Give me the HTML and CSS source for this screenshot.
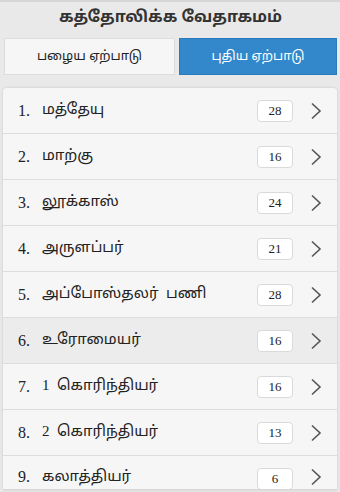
FILE: index.html
```html
<!DOCTYPE html>
<html lang="ta">
<head>
<meta charset="utf-8">
<title>கத்தோலிக்க வேதாகமம்</title>
<link rel="stylesheet" href="styles.css">
</head>
<body>
<div class="page">
  <header class="header">
    <h1 class="title">கத்தோலிக்க வேதாகமம்</h1>
    <div class="tabs">
      <button class="tab">பழைய ஏற்பாடு</button>
      <button class="tab tab-active">புதிய ஏற்பாடு</button>
    </div>
  </header>
  <div class="list-wrap">
    <ul class="list">
      <li class="row"><span class="num">1.</span><span class="name">மத்தேயு</span><span class="count">28</span><span class="chev"><svg width="12" height="18" viewBox="0 0 12 18"><path d="M2 1.5 L10 9 L2 16.5" fill="none" stroke="#555" stroke-width="1.6"/></svg></span></li>
      <li class="row"><span class="num">2.</span><span class="name">மாற்கு</span><span class="count">16</span><span class="chev"><svg width="12" height="18" viewBox="0 0 12 18"><path d="M2 1.5 L10 9 L2 16.5" fill="none" stroke="#555" stroke-width="1.6"/></svg></span></li>
      <li class="row"><span class="num">3.</span><span class="name">லூக்காஸ்</span><span class="count">24</span><span class="chev"><svg width="12" height="18" viewBox="0 0 12 18"><path d="M2 1.5 L10 9 L2 16.5" fill="none" stroke="#555" stroke-width="1.6"/></svg></span></li>
      <li class="row"><span class="num">4.</span><span class="name">அருளப்பர்</span><span class="count">21</span><span class="chev"><svg width="12" height="18" viewBox="0 0 12 18"><path d="M2 1.5 L10 9 L2 16.5" fill="none" stroke="#555" stroke-width="1.6"/></svg></span></li>
      <li class="row"><span class="num">5.</span><span class="name">அப்போஸ்தலர் &nbsp;பணி</span><span class="count">28</span><span class="chev"><svg width="12" height="18" viewBox="0 0 12 18"><path d="M2 1.5 L10 9 L2 16.5" fill="none" stroke="#555" stroke-width="1.6"/></svg></span></li>
      <li class="row row-hover"><span class="num">6.</span><span class="name">உரோமையர்</span><span class="count">16</span><span class="chev"><svg width="12" height="18" viewBox="0 0 12 18"><path d="M2 1.5 L10 9 L2 16.5" fill="none" stroke="#555" stroke-width="1.6"/></svg></span></li>
      <li class="row"><span class="num">7.</span><span class="name">1 &nbsp;கொரிந்தியர்</span><span class="count">16</span><span class="chev"><svg width="12" height="18" viewBox="0 0 12 18"><path d="M2 1.5 L10 9 L2 16.5" fill="none" stroke="#555" stroke-width="1.6"/></svg></span></li>
      <li class="row"><span class="num">8.</span><span class="name">2 &nbsp;கொரிந்தியர்</span><span class="count">13</span><span class="chev"><svg width="12" height="18" viewBox="0 0 12 18"><path d="M2 1.5 L10 9 L2 16.5" fill="none" stroke="#555" stroke-width="1.6"/></svg></span></li>
      <li class="row row-last"><span class="num">9.</span><span class="name">கலாத்தியர்</span><span class="count">6</span><span class="chev"><svg width="12" height="18" viewBox="0 0 12 18"><path d="M2 1.5 L10 9 L2 16.5" fill="none" stroke="#555" stroke-width="1.6"/></svg></span></li>
    </ul>
  </div>
</div>
</body>
</html>
```
FILE: styles.css
```css
html, body {
  margin: 0;
  padding: 0;
  background: #e9e9e9;
}
.page {
  width: 340px;
  height: 492px;
  display: flex;
  flex-direction: column;
  border-top: 2px solid #d6d6d6;
  box-sizing: border-box;
  font-family: "Liberation Serif", "Noto Sans Tamil", "Lohit Tamil", serif;
  color: #222;
  overflow: hidden;
}
.header {
  display: flex;
  flex-direction: column;
  padding: 0 3px 0 4px;
}
.title {
  margin: 0;
  height: 36px;
  line-height: 33px;
  text-align: center;
  font-family: "Noto Sans Tamil", "Noto Sans", sans-serif;
  font-size: 16px;
  font-weight: bold;
  color: #333;
}
.tabs {
  display: flex;
  gap: 4px;
  height: 37px;
}
.tab {
  flex: 1 1 0;
  margin: 0;
  border: 1px solid #dcdcdc;
  background: #f6f6f6;
  color: #222;
  font-family: "Noto Sans Tamil", "Noto Sans", sans-serif;
  font-size: 13px;
  padding: 0;
  border-radius: 0;
}
.tab:first-child {
  flex-basis: 0;
  flex-grow: 171;
}
.tab-active {
  flex-grow: 158;
  background: #3388cc;
  border-color: #2a7bbd;
  color: #fff;
}
.list-wrap {
  margin: 13px 3px 0 3px;
  height: 401px;
  overflow: hidden;
  border-radius: 4px 4px 0 0;
  box-shadow: 0 0 3px rgba(0,0,0,0.15);
  border-bottom: 1px solid #d8d8d8;
}
.list {
  list-style: none;
  margin: 0;
  padding: 0;
}
.row {
  display: flex;
  align-items: center;
  height: 45px;
  border-bottom: 1px solid #dddddd;
  background: #f6f6f6;
  padding: 0 0 0 15px;
  font-size: 16px;
}
.row-last {
  height: 33px;
  align-items: flex-start;
  padding-top: 12px;
  border-bottom: none;
}
.row-last .count,
.row-last .num,
.row-last .name {
  margin-top: 0;
}
.row-hover {
  background: #ececec;
}
.num {
  width: 24px;
  flex: none;
}
.name {
  flex: 1 1 auto;
  font-size: 15px;
}
.count {
  flex: none;
  width: 36px;
  height: 22px;
  box-sizing: border-box;
  border: 1px solid #dadada;
  border-radius: 4px;
  background: #fff;
  text-align: center;
  line-height: 20px;
  font-size: 13px;
  font-weight: normal;
  color: #222;
}
.chev {
  flex: none;
  width: 42px;
  display: flex;
  justify-content: center;
  padding-left: 2px;
}
.chev svg {
  display: block;
}
```
